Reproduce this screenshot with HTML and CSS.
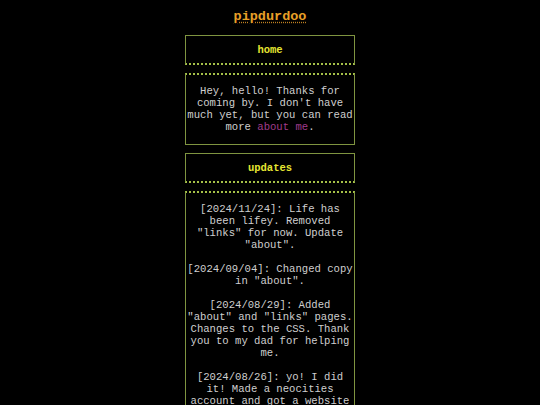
FILE: index.html
```html
<!DOCTYPE html>
<html>
<head>
<meta charset="utf-8">
<link rel="stylesheet" href="styles.css">
</head>
<body>
<div class="page">
  <h1 class="title">pipdurdoo</h1>
  <div class="head-box"><span class="head">home</span></div>
  <div class="body-box">
    <p>Hey, hello! Thanks for coming by. I don't have much yet, but you can read more <a href="#" class="link">about me</a>.</p>
  </div>
  <div class="head-box"><span class="head">updates</span></div>
  <div class="body-box">
    <p>[2024/11/24]: Life has been lifey. Removed "links" for now. Update "about".</p>
    <p>[2024/09/04]: Changed copy in "about".</p>
    <p>[2024/08/29]: Added "about" and "links" pages. Changes to the CSS. Thank you to my dad for helping me.</p>
    <p>[2024/08/26]: yo! I did it! Made a neocities account and got a website up and running.</p>
  </div>
</div>
</body>
</html>
```
FILE: styles.css
```css
html, body {
  margin: 0;
  padding: 0;
  background: #000;
}
body {
  font-family: "Liberation Mono", "Courier New", monospace;
  color: #cfcfcf;
  font-size: 10.6px;
  line-height: 12px;
}
.page {
  width: 170px;
  margin: 0 auto;
  padding-top: 8px;
  display: flex;
  flex-direction: column;
}
.title {
  margin: 0 0 10px 0;
  text-align: center;
  font-size: 13.5px;
  line-height: 17px;
  font-weight: bold;
  color: #e8a028;
  text-decoration: underline dotted #c08020;
  text-underline-offset: 2px;
}
.head-box {
  border: 1px solid #7f9440;
  border-bottom: 2px dotted #a5c048;
  text-align: center;
  padding: 8px 0 7px;
  margin-bottom: 8px;
}
.head {
  font-weight: bold;
  color: #e6e632;
  font-size: 10.5px;
  line-height: 12px;
}
.body-box {
  border: 1px solid #7f9440;
  border-top: 2px dotted #a5c048;
  text-align: center;
  padding: 10px 1px 11px;
  margin-bottom: 8px;
}
.body-box p {
  margin: 0 0 12px 0;
}
.body-box p:last-child {
  margin-bottom: 0;
}
.link {
  color: #a03c8c;
  text-decoration: none;
}
```
